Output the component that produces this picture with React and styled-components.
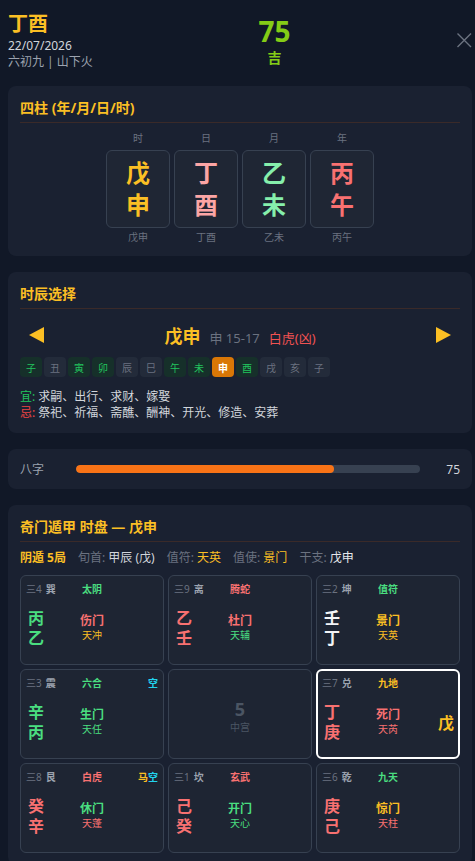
import React from "react";
import styled, { createGlobalStyle } from "styled-components";

const GlobalStyle = createGlobalStyle`
    body {
        margin: 0;
        background: #111827;
        font-family: "Noto Sans", "Noto Sans CJK SC", sans-serif;
        color: #d1d5db;
    }
`;

const pillars = [
    { label: "时", stem: "戊", branch: "申", color: "#fbbf24" },
    { label: "日", stem: "丁", branch: "酉", color: "#fca5a5" },
    { label: "月", stem: "乙", branch: "未", color: "#86efac" },
    { label: "年", stem: "丙", branch: "午", color: "#f87171" },
];

const hours = [
    ["子", "good"],
    ["丑", "bad"],
    ["寅", "good"],
    ["卯", "good"],
    ["辰", "bad"],
    ["巳", "bad"],
    ["午", "good"],
    ["未", "good"],
    ["申", "active"],
    ["酉", "good"],
    ["戌", "bad"],
    ["亥", "bad"],
    ["子", "bad"],
];

const G = "#4ade80";
const R = "#f87171";
const A = "#fbbf24";
const W = "#f3f4f6";
const C = "#22d3ee";

const palaces = [
    { num: 4, name: "巽", deity: ["太阴", G], stems: ["丙", "乙"], stemColor: G, door: ["伤门", R], star: ["天冲", A] },
    { num: 9, name: "离", deity: ["腾蛇", R], stems: ["乙", "壬"], stemColor: R, door: ["杜门", R], star: ["天辅", G] },
    { num: 2, name: "坤", deity: ["值符", G], stems: ["壬", "丁"], stemColor: W, door: ["景门", A], star: ["天英", A] },
    { num: 3, name: "震", deity: ["六合", G], extra: [["空", C]], stems: ["辛", "丙"], stemColor: G, door: ["生门", G], star: ["天任", G] },
    { center: true },
    { num: 7, name: "兑", deity: ["九地", A], stems: ["丁", "庚"], stemColor: R, door: ["死门", R], star: ["天芮", R], side: "戊", active: true },
    { num: 8, name: "艮", deity: ["白虎", R], extra: [["马", A], ["空", C]], stems: ["癸", "辛"], stemColor: R, door: ["休门", G], star: ["天蓬", R] },
    { num: 1, name: "坎", deity: ["玄武", R], stems: ["己", "癸"], stemColor: R, door: ["开门", G], star: ["天心", G] },
    { num: 6, name: "乾", deity: ["九天", G], stems: ["庚", "己"], stemColor: R, door: ["惊门", A], star: ["天柱", R] },
];

const Arrow = ({ dir }) => (
    <svg width="15" height="16" viewBox="0 0 15 16">
        {dir === "left" ? (
            <polygon points="15,0 15,16 0,8" fill="#fbbf24" />
        ) : (
            <polygon points="0,0 0,16 15,8" fill="#fbbf24" />
        )}
    </svg>
);

const Palace = ({ p }) => {
    if (p.center) {
        return (
            <Cell>
                <CenterBox>
                    <CenterNum>5</CenterNum>
                    <CenterName>中宫</CenterName>
                </CenterBox>
            </Cell>
        );
    }
    return (
        <Cell $active={p.active}>
            <CellHead>
                <span>
                    <Trigram>三{p.num}</Trigram>
                    <PalaceName>{p.name}</PalaceName>
                </span>
                <Deity $color={p.deity[1]}>{p.deity[0]}</Deity>
                <Extra>
                    {(p.extra || []).map(([t, c], i) => (
                        <Tone key={i} $color={c}>
                            {t}
                        </Tone>
                    ))}
                </Extra>
            </CellHead>
            <CellBody>
                <Stems $color={p.stemColor}>
                    <span>{p.stems[0]}</span>
                    <span>{p.stems[1]}</span>
                </Stems>
                <DoorBox>
                    <Door $color={p.door[1]}>{p.door[0]}</Door>
                    <Star $color={p.star[1]}>{p.star[0]}</Star>
                </DoorBox>
                <Side>{p.side}</Side>
            </CellBody>
        </Cell>
    );
};

const App = () => {
    return (
        <Page>
            <GlobalStyle />
            <Header>
                <HeaderLeft>
                    <GanZhi>丁酉</GanZhi>
                    <DateLine>22/07/2026</DateLine>
                    <SubLine>六初九 | 山下火</SubLine>
                </HeaderLeft>
                <Score>
                    <ScoreNum>75</ScoreNum>
                    <ScoreLabel>吉</ScoreLabel>
                </Score>
                <CloseBtn>
                    <svg width="16" height="16" viewBox="0 0 16 16">
                        <path d="M1.5 1.5 L15 15 M15 1.5 L1.5 15" stroke="#6b7280" strokeWidth="1.4" fill="none" />
                    </svg>
                </CloseBtn>
            </Header>

            <Card>
                <CardTitle>四柱 (年/月/日/时)</CardTitle>
                <Pillars>
                    {pillars.map((p) => (
                        <PillarCol key={p.label}>
                            <PillarLabel>{p.label}</PillarLabel>
                            <PillarBox>
                                <PillarChar $color={p.color}>{p.stem}</PillarChar>
                                <PillarChar $color={p.color}>{p.branch}</PillarChar>
                            </PillarBox>
                            <PillarLabel>
                                {p.stem}
                                {p.branch}
                            </PillarLabel>
                        </PillarCol>
                    ))}
                </Pillars>
            </Card>

            <Card>
                <CardTitle>时辰选择</CardTitle>
                <NavRow>
                    <Arrow dir="left" />
                    <NavCenter>
                        <NavMain>戊申</NavMain>
                        <NavTime>申 15-17</NavTime>
                        <NavGod>白虎(凶)</NavGod>
                    </NavCenter>
                    <Arrow dir="right" />
                </NavRow>
                <Chips>
                    {hours.map(([h, kind], i) => (
                        <Chip key={i} $kind={kind}>
                            {h}
                        </Chip>
                    ))}
                </Chips>
                <Advice>
                    <div>
                        <Tone $color="#22c55e">宜:</Tone> 求嗣、出行、求财、嫁娶
                    </div>
                    <div>
                        <Tone $color="#ef4444">忌:</Tone> 祭祀、祈福、斋醮、酬神、开光、修造、安葬
                    </div>
                </Advice>
            </Card>

            <BarCard>
                <BarLabel>八字</BarLabel>
                <Track>
                    <Fill style={{ width: "75%" }} />
                </Track>
                <BarValue>75</BarValue>
            </BarCard>

            <Card>
                <CardTitle>奇门遁甲 时盘 — 戊申</CardTitle>
                <InfoLine>
                    <Strong $color={A}>阴遁 5局</Strong>
                    <span>
                        <Muted>旬首: </Muted>
                        <Tone $color="#d1d5db">甲辰 (戊)</Tone>
                    </span>
                    <span>
                        <Muted>值符: </Muted>
                        <Tone $color={A}>天英</Tone>
                    </span>
                    <span>
                        <Muted>值使: </Muted>
                        <Tone $color={A}>景门</Tone>
                    </span>
                    <span>
                        <Muted>干支: </Muted>
                        <Tone $color="#e5e7eb">戊申</Tone>
                    </span>
                </InfoLine>
                <PalaceGrid>
                    {palaces.map((p, i) => (
                        <Palace key={i} p={p} />
                    ))}
                </PalaceGrid>
            </Card>
        </Page>
    );
};

export default App;

const Page = styled.div`
    padding: 10px 3px 40px 8px;
    display: flex;
    flex-direction: column;
    gap: 16px;
`;

const Header = styled.div`
    display: flex;
    justify-content: space-between;
    align-items: flex-start;
    height: 60px;
`;

const HeaderLeft = styled.div`
    display: flex;
    flex-direction: column;
`;

const GanZhi = styled.div`
    font-size: 20px;
    line-height: 28px;
    font-weight: 700;
    color: #fbbf24;
`;

const DateLine = styled.div`
    font-size: 12px;
    line-height: 16px;
    color: #d1d5db;
`;

const SubLine = styled.div`
    font-size: 12px;
    line-height: 16px;
    color: #9ca3af;
`;

const Score = styled.div`
    margin-top: 6px;
    display: flex;
    flex-direction: column;
    align-items: center;
`;

const ScoreNum = styled.div`
    font-size: 28px;
    line-height: 30px;
    font-weight: 700;
    color: #84cc16;
`;

const ScoreLabel = styled.div`
    margin-top: 2px;
    font-size: 14px;
    line-height: 20px;
    font-weight: 700;
    color: #84cc16;
`;

const CloseBtn = styled.div`
    margin-top: 22px;
    width: 16px;
    height: 16px;
    display: flex;
`;

const Card = styled.div`
    background: #1a2131;
    border-radius: 8px;
    padding: 12px 12px 12px;
`;

const CardTitle = styled.div`
    font-size: 14px;
    line-height: 20px;
    font-weight: 700;
    color: #fbbf24;
    padding-bottom: 4px;
    border-bottom: 1px solid #3a2a29;
`;

const Pillars = styled.div`
    display: flex;
    justify-content: center;
    gap: 4px;
    margin-top: 8px;
`;

const PillarCol = styled.div`
    width: 64px;
    display: flex;
    flex-direction: column;
    align-items: center;
    gap: 2px;

    & > :first-child {
        margin-bottom: 3px;
    }
`;

const PillarLabel = styled.div`
    font-size: 10px;
    line-height: 14px;
    color: #6b7280;
`;

const PillarBox = styled.div`
    box-sizing: border-box;
    width: 64px;
    height: 78px;
    border: 1px solid #374151;
    border-radius: 6px;
    background: #1f2634;
    display: flex;
    flex-direction: column;
    align-items: center;
    justify-content: center;
`;

const PillarChar = styled.div`
    font-size: 24px;
    line-height: 32px;
    font-weight: 700;
    color: ${(p) => p.$color};
`;

const NavRow = styled.div`
    margin-top: 12px;
    height: 28px;
    padding: 0 9px;
    display: flex;
    justify-content: space-between;
    align-items: center;
`;

const NavCenter = styled.div`
    display: flex;
    align-items: baseline;
    gap: 9px;
`;

const NavMain = styled.span`
    font-size: 18px;
    font-weight: 700;
    color: #fbbf24;
`;

const NavTime = styled.span`
    font-size: 13px;
    color: #6b7280;
`;

const NavGod = styled.span`
    font-size: 13px;
    color: #f05252;
`;

const Chips = styled.div`
    display: flex;
    gap: 2px;
    margin-top: 8px;
`;

const chipBg = { good: "#16302a", bad: "#232b3a", active: "#d97706" };
const chipFg = { good: "#22c55e", bad: "#6b7280", active: "#ffffff" };

const Chip = styled.div`
    width: 22px;
    height: 20px;
    border-radius: 4px;
    display: flex;
    align-items: center;
    justify-content: center;
    font-size: 10px;
    font-weight: ${(p) => (p.$kind === "active" ? 700 : 400)};
    background: ${(p) => chipBg[p.$kind]};
    color: ${(p) => chipFg[p.$kind]};
`;

const Advice = styled.div`
    margin-top: 12px;
    font-size: 12px;
    line-height: 16px;
    color: #d1d5db;
`;

const Tone = styled.span`
    color: ${(p) => p.$color};
`;

const Strong = styled.span`
    color: ${(p) => p.$color};
    font-weight: 700;
`;

const Muted = styled.span`
    color: #6b7280;
`;

const BarCard = styled.div`
    background: #1a2131;
    border-radius: 8px;
    height: 40px;
    padding: 0 12px;
    display: flex;
    align-items: center;
`;

const BarLabel = styled.div`
    width: 56px;
    font-size: 12px;
    color: #9ca3af;
`;

const Track = styled.div`
    flex: 1;
    height: 8px;
    border-radius: 4px;
    background: #374151;
    overflow: hidden;
`;

const Fill = styled.div`
    height: 100%;
    border-radius: 4px;
    background: #f97316;
`;

const BarValue = styled.div`
    width: 40px;
    text-align: right;
    font-size: 12px;
    color: #d1d5db;
`;

const InfoLine = styled.div`
    margin-top: 8px;
    display: flex;
    gap: 12px;
    font-size: 12px;
    line-height: 16px;
`;

const PalaceGrid = styled.div`
    margin-top: 9px;
    display: grid;
    grid-template-columns: repeat(3, 144px);
    grid-auto-rows: 90px;
    gap: 4px;
`;

const Cell = styled.div`
    box-sizing: border-box;
    border: ${(p) => (p.$active ? "2px solid #ffffff" : "1px solid #374151")};
    border-radius: 6px;
    background: #1e2533;
    padding: ${(p) => (p.$active ? "5px 4px 3px" : "6px 5px 4px")};
    display: flex;
    flex-direction: column;
`;

const CellHead = styled.div`
    display: grid;
    grid-template-columns: 40px 52px 1fr;
    font-size: 10px;
    line-height: 14px;
`;

const Trigram = styled.span`
    color: #6b7280;
`;

const PalaceName = styled.span`
    color: #9ca3af;
    font-weight: 700;
    margin-left: 4px;
`;

const Deity = styled.span`
    text-align: center;
    font-weight: 700;
    color: ${(p) => p.$color};
`;

const Extra = styled.span`
    text-align: right;
    font-weight: 700;
`;

const CellBody = styled.div`
    flex: 1;
    display: grid;
    grid-template-columns: 40px 52px 1fr;
    align-items: center;
`;

const Stems = styled.div`
    display: flex;
    flex-direction: column;
    padding-left: 2px;
    font-size: 16px;
    line-height: 20px;
    font-weight: 700;
    color: ${(p) => p.$color};
`;

const DoorBox = styled.div`
    display: flex;
    flex-direction: column;
    align-items: center;
`;

const Door = styled.div`
    font-size: 12px;
    line-height: 14px;
    font-weight: 700;
    color: ${(p) => p.$color};
`;

const Star = styled.div`
    font-size: 10px;
    line-height: 14px;
    color: ${(p) => p.$color};
`;

const Side = styled.div`
    text-align: right;
    font-size: 16px;
    font-weight: 700;
    color: #fbbf24;
`;

const CenterBox = styled.div`
    flex: 1;
    display: flex;
    flex-direction: column;
    align-items: center;
    justify-content: center;
    padding-top: 2px;
`;

const CenterNum = styled.div`
    font-size: 18px;
    line-height: 22px;
    font-weight: 700;
    color: #4b5563;
`;

const CenterName = styled.div`
    font-size: 10px;
    line-height: 14px;
    color: #4b5563;
`;
